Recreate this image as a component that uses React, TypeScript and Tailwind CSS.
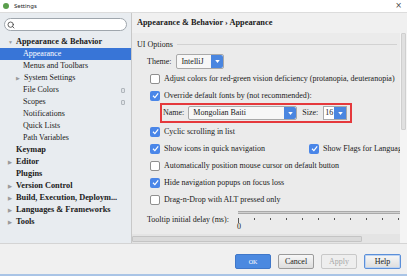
import { Search } from "lucide-react";

type NavItem = {
	label: string;
	indent: number;
	bold?: boolean;
	arrow?: "open" | "closed";
	selected?: boolean;
	badge?: boolean;
};

const navItems: NavItem[] = [
	{ label: "Appearance & Behavior", indent: 16, bold: true, arrow: "open" },
	{ label: "Appearance", indent: 23, selected: true },
	{ label: "Menus and Toolbars", indent: 23 },
	{ label: "System Settings", indent: 24, arrow: "closed" },
	{ label: "File Colors", indent: 23, badge: true },
	{ label: "Scopes", indent: 23, badge: true },
	{ label: "Notifications", indent: 23 },
	{ label: "Quick Lists", indent: 23 },
	{ label: "Path Variables", indent: 23 },
	{ label: "Keymap", indent: 16, bold: true },
	{ label: "Editor", indent: 16, bold: true, arrow: "closed" },
	{ label: "Plugins", indent: 16, bold: true },
	{ label: "Version Control", indent: 16, bold: true, arrow: "closed" },
	{ label: "Build, Execution, Deploym...", indent: 16, bold: true, arrow: "closed" },
	{ label: "Languages & Frameworks", indent: 16, bold: true, arrow: "closed" },
	{ label: "Tools", indent: 16, bold: true, arrow: "closed" },
];

const Check = ({ checked }: { checked?: boolean }) =>
	checked ? (
		<span className="flex h-[10px] w-[10px] shrink-0 items-center justify-center rounded-[2px] bg-[#4a86e8]">
			<svg viewBox="0 0 10 10" className="h-[9px] w-[9px]">
				<path d="M2.2 5.3 L4.3 7.4 L8 2.6" fill="none" stroke="white" strokeWidth="1.3" />
			</svg>
		</span>
	) : (
		<span className="h-[10px] w-[10px] shrink-0 rounded-[2px] border border-[#8f8f8f] bg-white" />
	);

const ArrowBtn = ({ className = "" }: { className?: string }) => (
	<span className={`flex h-full w-[12px] items-center justify-center bg-[#4a86e0] ${className}`}>
		<svg viewBox="0 0 6 4" className="h-[3px] w-[5px]">
			<path d="M0 0 H6 L3 4 Z" fill="white" />
		</svg>
	</span>
);

const CheckRow = ({
	checked,
	label,
	children,
}: {
	checked?: boolean;
	label: string;
	children?: React.ReactNode;
}) => (
	<div className="flex h-[17px] items-center whitespace-nowrap pl-[13px]">
		<Check checked={checked} />
		<span className="ml-[4px]">{label}</span>
		{children}
	</div>
);

export default function App() {
	return (
		<div className="flex h-[276px] w-[407px] flex-col overflow-hidden bg-[#f0f0f0] font-['Liberation_Serif',serif] text-[8px] leading-[12px] text-[#1a1a1a]">
			{/* title bar */}
			<div className="flex h-[13px] shrink-0 items-center border-b border-[#dcdcdc] bg-white pl-[3px] pr-[5px]">
				<span className="h-[6px] w-[6px] rounded-full bg-[#5a9e4c]" />
				<span className="ml-[5px] font-['Noto_Sans',sans-serif] text-[6px] leading-[8px] text-[#222]">
					Settings
				</span>
				<span className="ml-auto font-['DejaVu_Sans',sans-serif] text-[8px] leading-[8px] text-[#444]">
					×
				</span>
			</div>

			<div className="flex h-[230px] shrink-0">
				{/* sidebar */}
				<div className="flex w-[131px] shrink-0 flex-col bg-[#e8ecf0]">
					<div className="mx-[4px] mt-[5px] flex h-[13px] items-center rounded-full border border-[#9fa6ad] bg-white pl-[2px]">
						<Search className="h-[8px] w-[8px] text-[#444]" strokeWidth={2.5} />
					</div>
					<div className="mt-[5px] flex flex-col">
						{navItems.map((it) => (
							<div
								key={it.label}
								className={`relative flex h-[12px] items-center whitespace-nowrap ${
									it.selected ? "bg-[#3875d7] text-white" : ""
								} ${it.bold ? "text-[8.3px] font-bold" : ""}`}
								style={{ paddingLeft: it.indent }}
							>
								{it.arrow && (
									<span
										className="absolute text-[5px] leading-[5px] text-[#9a9a9a]"
										style={{ left: it.indent - 8 }}
									>
										{it.arrow === "open" ? "▼" : "▶"}
									</span>
								)}
								{it.label}
								{it.badge && (
									<span className="absolute left-[121px] h-[5px] w-[4px] rounded-[1px] border border-[#b0b6bc] bg-[#dfe3e7]" />
								)}
							</div>
						))}
					</div>
				</div>

				{/* right side */}
				<div className="flex flex-1 flex-col border-l border-[#c8c8c8]">
					<div className="flex h-[20px] shrink-0 items-center pl-[5px] text-[8.3px] font-bold">
						Appearance &amp; Behavior › Appearance
					</div>
					<div className="flex flex-1 bg-[#ebebeb]">
						<div className="flex w-[268px] flex-col">
							<div className="flex-1 overflow-hidden pl-[5px] pt-[3px]">
								<div className="flex h-[17px] items-center">
									<span>UI Options</span>
									<span className="ml-[4px] mr-[3px] h-px flex-1 bg-[#d2d2d2]" />
								</div>
								<div className="flex h-[17px] items-center pl-[10px]">
									<span>Theme:</span>
									<span className="ml-[5px] flex h-[15px] w-[48px] items-center rounded-[2px] border border-[#a9a9a9] bg-[#f7f7f7] pl-[4px]">
										<span className="flex-1">IntelliJ</span>
										<ArrowBtn className="rounded-r-[2px]" />
									</span>
								</div>
								<CheckRow label="Adjust colors for red-green vision deficiency (protanopia, deuteranopia)">
									<span className="ml-[9px] text-[#2f5fb3]">How it works</span>
								</CheckRow>
								<div className="-mb-px">
									<CheckRow checked label="Override default fonts by (not recommended):" />
								</div>
								<div className="ml-[23px] flex h-[20px] w-[192px] items-center border-2 border-[#e5393c] pl-[1px]">
									<span>Name:</span>
									<span className="ml-[4px] flex h-[14px] w-[109px] items-center rounded-[2px] border border-[#a9a9a9] bg-[#f7f7f7] pl-[4px]">
										<span className="flex-1">Mongolian Baiti</span>
										<ArrowBtn className="rounded-r-[2px]" />
									</span>
									<span className="ml-[5px]">Size:</span>
									<span className="ml-[5px] flex h-[14px] w-[24px] items-center border border-[#a9a9a9] bg-white pl-[1px]">
										<span className="flex-1">16</span>
										<ArrowBtn />
									</span>
								</div>
								<CheckRow checked label="Cyclic scrolling in list" />
								<div className="flex h-[17px] items-center whitespace-nowrap pl-[13px]">
									<Check checked />
									<span className="ml-[4px] w-[145px] shrink-0">Show icons in quick navigation</span>
									<Check checked />
									<span className="ml-[4px]">Show Flags for Language Hints</span>
								</div>
								<CheckRow label="Automatically position mouse cursor on default button" />
								<CheckRow checked label="Hide navigation popups on focus loss" />
								<CheckRow label="Drag-n-Drop with ALT pressed only" />
								<div className="flex pl-[10px]">
									<span className="mt-[6px] whitespace-nowrap">Tooltip initial delay (ms):</span>
									<div className="ml-[9px] flex flex-1 flex-col pt-[3px]">
										<div className="h-[3px] border-y border-[#a9a9a9] bg-[#d0d0d0]" />
										<div className="mt-[4px] flex h-[4px] justify-between pr-[1px]">
											{Array.from({ length: 11 }).map((_, i) => (
												<span
													key={i}
													className={`w-px bg-[#555] ${i === 0 ? "h-[5px]" : "h-[2px]"}`}
												/>
											))}
										</div>
										<span className="-ml-[1px] leading-[9px]">0</span>
									</div>
								</div>
							</div>
							{/* horizontal scrollbar */}
							<div className="flex h-[9px] shrink-0 items-center bg-[#e4e4e4]">
								<span className="h-[6px] w-[230px] rounded-[1px] border border-[#c4c4c4] bg-[#dadada]" />
							</div>
						</div>
						{/* vertical scrollbar */}
						<div className="flex w-[7px] flex-col bg-[#f4f4f4]">
							<span className="mx-[1px] h-[97px] rounded-[1px] border border-[#cfcfcf] bg-[#e0e0e0]" />
						</div>
					</div>
				</div>
			</div>

			{/* footer */}
			<div className="flex flex-1 items-start border-t border-[#d4d4d4] bg-[#f0f0f0] pt-[10px]">
				<div className="ml-[235px] flex gap-[7px]">
					<button className="h-[15px] w-[36px] rounded-[2px] border border-[#3f77c9] bg-[#4b89e0] text-[6px] text-white">
						OK
					</button>
					<button className="h-[15px] w-[36px] rounded-[2px] border border-[#9b9b9b] bg-gradient-to-b from-[#f7f7f7] to-[#dddddd] text-[8px]">
						Cancel
					</button>
					<button className="h-[15px] w-[36px] rounded-[2px] border border-[#c8c8c8] bg-[#eeeeee] text-[8px] text-[#a8a8a8]">
						Apply
					</button>
					<button className="h-[15px] w-[37px] rounded-[2px] border border-[#5b8fd9] bg-gradient-to-b from-[#f7f7f7] to-[#dddddd] text-[8px] shadow-[inset_0_0_0_1px_#bcd3f2]">
						Help
					</button>
				</div>
			</div>
			<div className="h-[2px] shrink-0 bg-[#a9c4e6]" />
		</div>
	);
}
